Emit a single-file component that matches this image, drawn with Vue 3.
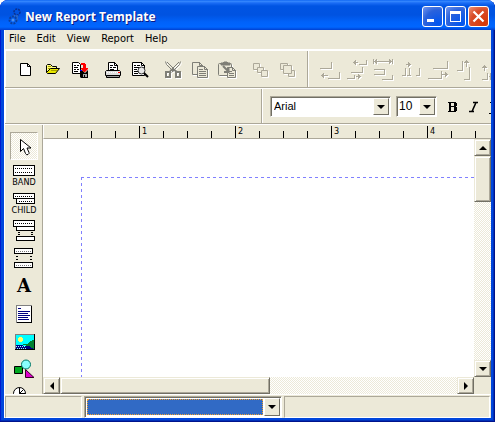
<script setup>
import { ref } from 'vue'

const menus = ['File', 'Edit', 'View', 'Report', 'Help']
const font = ref('Arial')
const size = ref('10')
const band = ref('')
const tool = ref('Select')

/* Ruler divisions: one numbered mark for every four ticks. */
const ticks = Array.from({ length: 19 }, (_, i) => ({
  major: (i + 1) % 4 === 0,
  label: (i + 1) % 4 === 0 ? (i + 1) / 4 : ''
}))

const aligns = [
  { name: 'Align left', d: 'M3 12.500h12M14.500 6v6M11 22.500h12M22.500 16v6M4 19.500h7M6.500 17v5M5.500 18v3' },
  { name: 'Align center', d: 'M15 8.500h8M22.500 4v5M7 16.500h12M18.500 11v5M3 22.500h8M10.500 19v4M9 6.500h5M11.500 4v5M10.500 5v3M12 20.500h5M14.500 18v5M15.500 19v3' },
  { name: 'Same width', d: 'M2.500 3v5M21.500 3v5M3 5.500h18M5.500 3v5M4.500 4v3M18.500 3v5M19.500 4v3M3 13.500h10M3 18.500h11M13.500 13v5M11 23.500h11M21.500 19v5' },
  { name: 'Space evenly', d: 'M4 19.500h4M7.500 12v7M9 19.500h4M11.500 12v7M18 19.500h4M21.500 12v7M8 8.500h5M10.500 6v5M11.500 7v3' },
  { name: 'Align right', d: 'M8 12.500h15M22.500 5v7M3 22.500h14M16.500 15v7M17 18.500h6M20.500 16v5M21.500 17v3' },
  { name: 'Align top', d: 'M5 14.500h6M10.500 5v9M12 23.500h6M17.500 11v12M14.500 4v7M12 6.500h5M13 5.500h3' },
  { name: 'Align middle', d: 'M3 23.500h6M8.500 17v6M5.500 9v6M3 11.500h5M4 10.500h3M11.500 17v7M10 20.500h6' }
]
</script>

<template>
  <main class="window">
    <header class="title">
      <svg class="logo" width="14" height="18" viewBox="0 0 14 18" fill="none" aria-hidden="true">
        <circle cx="9" cy="4" r="3" stroke="#0a2f8c" stroke-width="1.500" stroke-dasharray="2 1" />
        <path d="M7 7L5 9M9 7v6" stroke="#2f6cc8" stroke-width="1.500" />
        <circle cx="5" cy="12" r="3.500" stroke="#0b409f" stroke-width="2" stroke-dasharray="2 1" />
        <circle cx="5" cy="12" r="1.500" fill="#4b91ee" />
      </svg>
      <h1>New Report Template</h1>
      <div class="controls">
        <button type="button" aria-label="Minimize">
          <svg width="19" height="19" viewBox="0 0 19 19"><path d="M4 12h7v3H4z" fill="#fff" /></svg>
        </button>
        <button type="button" aria-label="Maximize">
          <svg width="19" height="19" viewBox="0 0 19 19"><path fill-rule="evenodd" d="M4 4h11v11H4zM5 7v7h9V7z" fill="#fff" /></svg>
        </button>
        <button type="button" class="close" aria-label="Close">
          <svg width="19" height="19" viewBox="0 0 19 19"><path d="M4.500 4.500l10 10M14.500 4.500l-10 10" stroke="#fff" stroke-width="2.200" /></svg>
        </button>
      </div>
    </header>

    <div class="client">
      <nav class="menu">
        <a v-for="m in menus" :key="m" href="#">{{ m }}</a>
      </nav>

      <div class="bar">
        <div class="group files">
          <div class="set">
            <button type="button" class="tool" aria-label="New">
              <svg viewBox="0 0 27 27"><path d="M7.500 7.500h7l3 3v9h-10z" fill="#fff" stroke="#000" /><path d="M14.500 7v3.500H18" fill="none" stroke="#000" /></svg>
            </button>
            <button type="button" class="tool" aria-label="Open">
              <svg viewBox="0 0 27 27">
                <path d="M6.500 16.500v-7l1-1h3l2 2h4v3" fill="#ffff80" stroke="#000" />
                <path d="M6.500 16.500l4-4h9l-4 5h-8z" fill="#e8e800" stroke="#000" />
                <path d="M8 10.500h3M8 12.500h2M11 14.500h6" stroke="#a8a000" />
              </svg>
            </button>
            <button type="button" class="tool" aria-label="Save">
              <svg viewBox="0 0 27 27">
                <path d="M5.500 6.500h6l2 2v9h-8z" fill="#fff" stroke="#000" />
                <path d="M7 9.500h2M10 9.500h2M7 11.500h4M7 13.500h2M10 13.500h2M7 15.500h4" stroke="#000" />
                <path d="M13 14h2l3 3 3-3v8h-7l-1-1z" fill="#000" />
                <path d="M14 7h4v1h1v4h2v1l-3 3-1 0-3-3v-1h2V9h-2z" fill="#f00" />
                <path d="M16 18h4v3h-4z" fill="#aaa" /><path d="M17 19h1v3h-1z" fill="#000" /><path d="M13 14.500h2" stroke="#00f" />
              </svg>
            </button>
          </div>
          <div class="set">
            <button type="button" class="tool" aria-label="Print">
              <svg viewBox="0 0 27 27">
                <path d="M8.500 14.500v-8h6l3 3v5" fill="#fff" stroke="#000" />
                <path d="M14.500 6v3.500H18M10 9.500h3M10 11.500h2M13 11.500h3M10 13.500h4" stroke="#000" fill="none" />
                <path d="M6.500 14.500h13l1 1v4h-15v-4z" fill="#ddd" stroke="#000" />
                <path d="M7 16.500h11" stroke="#fff" stroke-dasharray="1 1" /><path d="M18 16h2v1h-2z" fill="#f00" />
                <path d="M6.500 19.500h13v2h-13z" fill="#999" stroke="#000" />
              </svg>
            </button>
            <button type="button" class="tool" aria-label="Preview">
              <svg viewBox="0 0 27 27">
                <path d="M5.500 6.500h9l3 3v10h-12z" fill="#fff" stroke="#000" />
                <path d="M14.500 6v3.500H18M7 9.500h2M10 9.500h3M7 11.500h5M7 13.500h3M7 15.500h4M7 17.500h4" fill="none" stroke="#000" />
                <circle cx="14.500" cy="14.500" r="3.500" fill="#e8e8e8" stroke="#333" />
                <path d="M17 17l4 4" stroke="#000" stroke-width="2" />
              </svg>
            </button>
          </div>
          <div class="set off">
            <button type="button" class="tool" aria-label="Cut">
              <svg viewBox="0 0 27 27">
                <g fill="none" stroke="#7f7f77">
                  <path d="M5.500 5.500l1 3 7 7M20.500 5.500l-1 3-8 8M7 6l7 7M19 6l-7 7" />
                  <path d="M6 16h4v5H6zM16 16h4v5h-4z" stroke-width="2" /><path d="M10 15l3-2 4 3" stroke-width="2" />
                </g>
              </svg>
            </button>
            <button type="button" class="tool" aria-label="Copy">
              <svg viewBox="0 0 27 27">
                <g fill="#ece9d8" stroke="#7f7f77">
                  <path d="M5.500 6.500h7l3 3v9h-10z" /><path d="M12.500 6v3.500H16" fill="none" />
                  <path d="M10.500 10.500h7l3 3v8h-10z" /><path d="M17.500 10v3.500H21M12 13.500h4M12 15.500h7M12 17.500h7M12 19.500h7" fill="none" />
                </g>
              </svg>
            </button>
            <button type="button" class="tool" aria-label="Paste">
              <svg viewBox="0 0 27 27">
                <g fill="#ece9d8" stroke="#7f7f77">
                  <rect x="4.500" y="7.500" width="13" height="12" rx="1" />
                  <path d="M7 9V7h2l1-1h3l1 1h2v2z" fill="#7f7f77" />
                  <path d="M13.500 11.500h5l3 3v7h-8z" /><path d="M18.500 11v3.500H22M15 15.500h3M15 17.500h5M15 19.500h5" fill="none" />
                  <path d="M9 10l5 5M14.500 11v5H10" stroke-width="2" fill="none" />
                </g>
              </svg>
            </button>
          </div>
          <div class="set off">
            <button type="button" class="tool" aria-label="Bring to front">
              <svg viewBox="0 0 27 27"><g fill="#ece9d8" stroke="#aca899"><path d="M6.500 7.500h6v6h-6z" /><path d="M10.500 11.500h6v5h-6z" /><path d="M14.500 14.500h6v6h-6z" /></g></svg>
            </button>
            <button type="button" class="tool" aria-label="Send to back">
              <svg viewBox="0 0 27 27"><g fill="#ece9d8" stroke="#aca899"><path d="M6.500 7.500h7v6h-7z" /><path d="M14.500 14.500h6v6h-6z" /><path d="M9.500 9.500h8v8h-8z" /></g></svg>
            </button>
          </div>
        </div>
        <div class="group aligns off">
          <button v-for="a in aligns" :key="a.name" type="button" class="tool" :aria-label="a.name">
            <svg viewBox="0 0 27 27" shape-rendering="crispEdges"><path :d="a.d" fill="none" stroke="#aca899" /></svg>
          </button>
        </div>
      </div>

      <div class="bar">
        <div class="group blank"></div>
        <div class="group format">
          <label class="combo wide"><select v-model="font" aria-label="Font"><option>Arial</option></select><i></i></label>
          <label class="combo"><select v-model="size" class="large" aria-label="Font size"><option>10</option></select><i></i></label>
          <div class="styles">
            <button type="button" class="tool" aria-label="Bold"><svg viewBox="0 0 22 27" shape-rendering="crispEdges"><path fill-rule="evenodd" d="M6 9h8v1h1v3h-1v1h1v4h-1v1H6v-1h1v-8H6zM9 10v3h3v-3zM9 14v4h3v-4z" /></svg></button>
            <button type="button" class="tool" aria-label="Italic"><svg viewBox="0 0 22 27"><path d="M9 9.500h5M5 18.500h5M12 9.500l-4 9" stroke="#000" stroke-width="1.600" /></svg></button>
            <button type="button" class="tool" aria-label="Underline"><svg viewBox="0 0 22 27" shape-rendering="crispEdges"><path d="M4 9h4v1H7v7h5V9h3v1h-1v6l-2 2H7l-2-2v-6H4zM3 20h13v1H3z" /></svg></button>
          </div>
        </div>
      </div>

      <div class="workspace">
        <aside class="palette">
          <button type="button" class="item" :class="{ on: tool === 'Select' }" aria-label="Select" @click="tool = 'Select'">
            <svg viewBox="0 0 28 28"><path d="M10.500 7.500v12l3-3 2 5q1 2 2.500 1t1-2l-2-4.500h4z" fill="#fff" stroke="#000" /></svg>
          </button>
          <button type="button" class="item named" @click="tool = 'Band'">
            <svg viewBox="0 0 28 16" shape-rendering="crispEdges"><path d="M3.500 4.500h21v10h-21z" fill="#fff" stroke="#000" /><path d="M5 7.500h18M5 11.500h18" stroke="#000" stroke-dasharray="1 1" /></svg>
            <span>BAND</span>
          </button>
          <button type="button" class="item named" @click="tool = 'Child'">
            <svg viewBox="0 0 28 16" shape-rendering="crispEdges"><path d="M3.500 4.500h21v5h-21zM6.500 9.500h18v5h-18z" fill="#fff" stroke="#000" /><path d="M5 7.500h18M9 12.500h14" stroke="#000" stroke-dasharray="1 1" /></svg>
            <span>CHILD</span>
          </button>
          <button type="button" class="item" aria-label="Group band">
            <svg viewBox="0 0 28 28" shape-rendering="crispEdges"><path d="M3.500 4.500h21v6h-21zM6.500 10.500h18v4h-18zM6.500 20.500h18v4h-18z" fill="#fff" stroke="#000" /><path d="M5 7.500h18" stroke="#000" stroke-dasharray="1 1" /><path d="M8 16.500h2M8 18.500h2M21 16.500h2M21 18.500h2" stroke="#000" /></svg>
          </button>
          <button type="button" class="item" aria-label="Sub band">
            <svg viewBox="0 0 28 28" shape-rendering="crispEdges"><path d="M4.500 4.500h18v5h-18zM4.500 18.500h18v5h-18z" fill="#fff" stroke="#000" /><path d="M6 7.500h15M6 21.500h15" stroke="#777" stroke-dasharray="1 1" /><path d="M6 12.500h2M6 15.500h2M20 12.500h2M20 15.500h2" stroke="#000" /></svg>
          </button>
          <button type="button" class="item letter">A</button>
          <button type="button" class="item" aria-label="Memo">
            <svg viewBox="0 0 28 28" shape-rendering="crispEdges"><path d="M6.500 5.500h15v17h-15z" fill="#fff" stroke="#808080" /><path d="M21.500 6v16.500H7" fill="none" stroke="#000" /><path d="M8 8.500h3M8 11.500h12M8 13.500h10M8 15.500h12M8 17.500h10M8 19.500h11" stroke="#000080" /></svg>
          </button>
          <button type="button" class="item" aria-label="Picture">
            <svg viewBox="0 0 28 28" shape-rendering="crispEdges"><path d="M5 6h20v16H5z" fill="#000" /><path d="M6 7h18v14H6z" fill="#0ff" /><path d="M24 12v9h-8v-4h-3v-1h4l3-3z" fill="#008030" /><path d="M6 17h6l2 1h5l5 3H6z" fill="#000080" /><path d="M6 18.500h9M7 20.500h9" stroke="#9ff" stroke-dasharray="1 1" /><path d="M8 10h1V9h3v1h1v3h-1v1H9v-1H8z" fill="#ff6" /><path d="M5.500 21V6.500H24" fill="none" stroke="#808080" /></svg>
          </button>
          <button type="button" class="item" aria-label="Shape">
            <svg viewBox="0 0 28 28"><path d="M4.500 10.500h8v7h-8z" fill="#00a820" stroke="#000" /><circle cx="16" cy="8.500" r="4.500" fill="#8ff" stroke="#076" /><path d="M15.500 13.500v8h8.500z" fill="#d0c" stroke="#302" /></svg>
          </button>
          <button type="button" class="item" aria-label="Chart">
            <svg viewBox="0 0 28 28"><circle cx="9.500" cy="9.500" r="6" fill="#fff" stroke="#000" /><path d="M9.500 3.500v6l4-4M9.500 9.500h6M9.500 9.500l-4 4" stroke="#000" fill="none" /></svg>
          </button>
        </aside>

        <section class="editor">
          <div class="ruler">
            <span v-for="(t, i) in ticks" :key="i" :class="{ major: t.major }">{{ t.label }}</span>
          </div>
          <div class="canvas"><div class="page"></div></div>
          <div class="vscroll track">
            <button type="button" class="raised" aria-label="Scroll up"><i class="up"></i></button>
            <div class="raised vthumb"></div>
            <button type="button" class="raised end" aria-label="Scroll down"><i class="down"></i></button>
          </div>
          <div class="hscroll track">
            <button type="button" class="raised" aria-label="Scroll left"><i class="left"></i></button>
            <div class="raised hthumb"></div>
            <button type="button" class="raised end" aria-label="Scroll right"><i class="right"></i></button>
          </div>
        </section>
      </div>

      <footer class="status">
        <div class="panel first"></div>
        <label class="combo chosen"><select v-model="band" aria-label="Object"><option value=""></option></select><i></i></label>
        <div class="panel rest"></div>
      </footer>
    </div>
  </main>
</template>

<style>
body {
  margin: 0;
  background: #fff;
}
</style>

<style scoped>
* {
  box-sizing: border-box;
}
button {
  padding: 0;
  border: 0;
  background: none;
  font: inherit;
  color: inherit;
  flex: none;
}
svg {
  display: block;
}
.window {
  display: flex;
  flex-direction: column;
  height: 100vh;
  padding: 0 4px 4px;
  overflow: hidden;
  border-radius: 8px 8px 0 0;
  background: #0046dc;
  box-shadow: inset -1px -1px #00138c, inset 1px 0 #0019cf, inset -2px -2px #0030b8;
  font-family: "DejaVu Sans Condensed", "DejaVu Sans", sans-serif;
  font-size: 11px;
  color: #000;
}
.title {
  display: flex;
  flex: none;
  align-items: center;
  height: 30px;
  margin: 0 -4px;
  padding: 3px 6px 0 8px;
  background: linear-gradient(#0058ee 0, #3a8cff 1px, #1a6cf5 3px, #0054e3 6px, #0053e1 15px, #0062fa 22px, #0066ff 27px, #0040d0 30px);
}
.logo {
  margin-right: 3px;
}
h1 {
  flex: 1;
  margin: 0;
  font: bold 12px/20px "Open Sans", "Noto Sans", sans-serif;
  color: #fff;
  white-space: nowrap;
  text-shadow: 1px 1px #0a1883;
}
.controls {
  display: flex;
  gap: 2px;
}
.controls button {
  width: 21px;
  height: 21px;
  border: 1px solid #fff;
  border-radius: 3px;
  background: radial-gradient(circle at 80% 85%, #0055f0, #2a62dc 60%, #7597ee);
}
.controls .close {
  background: radial-gradient(circle at 80% 85%, #d83808, #d84c28 60%, #ee9478);
}
.client {
  display: flex;
  flex: 1;
  flex-direction: column;
  min-height: 0;
  padding-left: 1px;
  background: #ece9d8;
  box-shadow: inset 1px 0 #fff;
}
.menu {
  display: flex;
  flex: none;
  gap: 11px;
  height: 21px;
  padding-left: 4px;
  border-bottom: 2px solid #fff;
  line-height: 18px;
}
.menu a {
  color: #000;
  text-decoration: none;
}
.bar {
  display: flex;
  flex: none;
  height: 37px;
  overflow: hidden;
  border-bottom: 1px solid #aca899;
}
.bar + .bar {
  height: 36px;
  border-top: 1px solid #fff;
}
.group {
  display: flex;
  flex: none;
  align-items: center;
  border-left: 1px solid #fff;
}
.group + .group {
  flex: 1;
  min-width: 0;
}
.files {
  gap: 6px;
  padding: 0 6px 0 7px;
  border-right: 1px solid #aca899;
}
.set,
.styles {
  display: flex;
}
.tool {
  width: 27px;
  height: 27px;
}
.styles .tool {
  width: 22px;
}
.off svg {
  filter: drop-shadow(1px 1px 0 #fff);
}
.aligns {
  padding-left: 8px;
}
.blank {
  flex: 0 0 257px;
  border-right: 1px solid #aca899;
}
.format {
  gap: 5px;
  padding-left: 7px;
}
.combo {
  display: flex;
  position: relative;
  flex: none;
  width: 41px;
  height: 21px;
  border: 1px solid;
  border-color: #aca899 #fff #fff #aca899;
  background: #fff;
  box-shadow: inset 1px 1px #716f64;
}
.combo.wide {
  width: 121px;
}
.combo select {
  appearance: none;
  width: 100%;
  padding: 0 18px 0 3px;
  border: 0;
  background: none;
  font: 11px "Liberation Sans", sans-serif;
  color: #000;
}
.combo .large {
  padding-left: 2px;
  font-size: 12px;
}
.combo i {
  position: absolute;
  top: 1px;
  right: 1px;
  bottom: 1px;
  width: 16px;
  border: 1px solid;
  border-color: #fff #716f64 #716f64 #fff;
  background: #ece9d8;
  pointer-events: none;
}
.combo i::after {
  content: "";
  display: block;
  margin: 6px 3px;
  border: 4px solid transparent;
  border-top-color: #000;
  border-bottom: 0;
}
.workspace {
  display: flex;
  flex: 1;
  min-height: 0;
  border-top: 1px solid #fff;
}
.palette {
  display: flex;
  flex: none;
  flex-direction: column;
  width: 38px;
  padding: 7px 4px 0 5px;
  overflow: hidden;
  border-right: 1px solid #aca899;
}
.item {
  display: block;
  width: 28px;
  height: 28px;
}
.item.on {
  border: 1px solid;
  border-color: #aca899 #fff #fff #aca899;
  background: repeating-conic-gradient(#fff 0 25%, #ece9d8 0 50%) 0 0 / 2px 2px;
}
.item.on svg {
  margin: -1px;
}
.named span {
  display: block;
  font: 9px/11px "DejaVu Sans Condensed", sans-serif;
  text-align: center;
}
.letter {
  font: bold 18px/28px "DejaVu Serif", serif;
}
.editor {
  display: grid;
  flex: 1;
  grid-template: 14px minmax(0, 1fr) 17px / minmax(0, 1fr) 17px;
  min-width: 0;
}
.ruler {
  display: flex;
  grid-column: 1 / 3;
  align-items: flex-end;
  overflow: hidden;
  border-bottom: 1px solid #aca899;
  border-left: 1px solid #fff;
}
.ruler span {
  flex: none;
  width: 24px;
  height: 7px;
  border-left: 1px solid #000;
}
.ruler span:first-child {
  margin-left: 23px;
}
.ruler .major {
  height: 12px;
  padding-left: 2px;
  font: 9px/10px "DejaVu Sans Condensed", sans-serif;
}
.canvas {
  display: flex;
  padding: 38px 0 0 38px;
  overflow: hidden;
  background: #fff;
}
.page {
  flex: 1;
  background:
    repeating-linear-gradient(90deg, #8080ff 0 3px, transparent 3px 6px) 0 0 / 100% 1px no-repeat,
    repeating-linear-gradient(#8080ff 0 3px, transparent 3px 6px) 0 0 / 1px 100% no-repeat;
}
.track {
  display: flex;
  background: repeating-conic-gradient(#fff 0 25%, #ece9d8 0 50%) 0 0 / 2px 2px;
}
.vscroll {
  flex-direction: column;
}
.raised {
  display: grid;
  place-items: center;
  flex: none;
  width: 17px;
  height: 17px;
  border: 1px solid;
  border-color: #ece9d8 #716f64 #716f64 #ece9d8;
  background: #ece9d8;
  box-shadow: inset 1px 1px #fff, inset -1px -1px #aca899;
}
.vthumb {
  height: 46px;
}
.hthumb {
  width: 210px;
}
.vscroll .end {
  margin-top: auto;
}
.hscroll .end {
  margin-left: auto;
}
.raised i {
  border: 4px solid transparent;
}
.raised .up {
  border-top: 0;
  border-bottom-color: #000;
}
.raised .down {
  border-bottom: 0;
  border-top-color: #000;
}
.raised .left {
  border-left: 0;
  border-right-color: #000;
}
.raised .right {
  border-right: 0;
  border-left-color: #000;
}
.status {
  display: flex;
  flex: none;
  gap: 2px;
  height: 24px;
  padding: 1px 1px 0 0;
  border-top: 1px solid #fff;
}
.panel {
  border: 1px solid;
  border-color: #aca899 #fff #fff #aca899;
}
.first {
  flex: 0 0 77px;
}
.rest {
  flex: 1;
}
.chosen {
  width: 198px;
  height: auto;
}
.chosen select {
  margin: 2px 18px 2px 2px;
  padding: 0;
  border: 1px dotted #f0a030;
  background: #316ac5;
}
</style>
